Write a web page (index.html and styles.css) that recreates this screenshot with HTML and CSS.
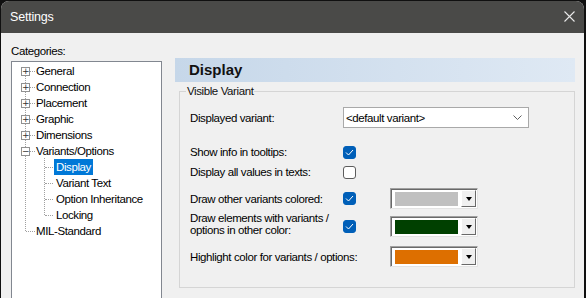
FILE: index.html
```html
<!DOCTYPE html>
<html lang="en">
<head>
    <meta charset="UTF-8">
    <title>Settings</title>
    <link rel="stylesheet" href="styles.css">
</head>
<body>
    <div class="window">
        <div class="titlebar">
            <span class="title">Settings</span>
            <svg class="close" width="11" height="11" viewBox="0 0 11 11">
                <path d="M0.5 0.5 L10.5 10.5 M10.5 0.5 L0.5 10.5" stroke="#e8e8e8" stroke-width="1.1" fill="none"/>
            </svg>
        </div>

        <div class="content">
            <div class="left-col">
                <div class="cat-label">Categories:</div>
                <div class="tree">
                    <div class="vline top-line"></div>
                    <div class="vline child-line"></div>

                    <div class="node">
                        <span class="exp">+</span><span class="tick"></span><span class="label">General</span>
                    </div>
                    <div class="node">
                        <span class="exp">+</span><span class="tick"></span><span class="label">Connection</span>
                    </div>
                    <div class="node">
                        <span class="exp">+</span><span class="tick"></span><span class="label">Placement</span>
                    </div>
                    <div class="node">
                        <span class="exp">+</span><span class="tick"></span><span class="label">Graphic</span>
                    </div>
                    <div class="node">
                        <span class="exp">+</span><span class="tick"></span><span class="label">Dimensions</span>
                    </div>
                    <div class="node">
                        <span class="exp minus">&minus;</span><span class="tick"></span><span class="label">Variants/Options</span>
                    </div>
                    <div class="node child">
                        <span class="tick"></span><span class="label selected">Display</span>
                    </div>
                    <div class="node child">
                        <span class="tick"></span><span class="label">Variant Text</span>
                    </div>
                    <div class="node child">
                        <span class="tick"></span><span class="label">Option Inheritance</span>
                    </div>
                    <div class="node child">
                        <span class="tick"></span><span class="label">Locking</span>
                    </div>
                    <div class="node leaf">
                        <span class="tick"></span><span class="label">MIL-Standard</span>
                    </div>
                </div>
            </div>

            <div class="right-col">
                <div class="page-head">Display</div>

                <fieldset class="group">
                    <legend>Visible Variant</legend>

                    <div class="row first">
                        <span class="row-label">Displayed variant:</span>
                        <div class="combo">
                            <span>&lt;default variant&gt;</span>
                            <svg width="9" height="5" viewBox="0 0 9 5">
                                <path d="M0.5 0.5 L4.5 4.5 L8.5 0.5" stroke="#606060" stroke-width="1" fill="none"/>
                            </svg>
                        </div>
                    </div>

                    <div class="row check-row tooltips">
                        <span class="row-label">Show info in tooltips:</span>
                        <span class="check on"><svg width="9" height="7" viewBox="0 0 9 7"><path d="M1 3.5 L3.5 6 L8 1" stroke="#fff" stroke-width="1" fill="none"/></svg></span>
                    </div>

                    <div class="row check-row">
                        <span class="row-label">Display all values in texts:</span>
                        <span class="check"></span>
                    </div>

                    <div class="row color-row other">
                        <span class="row-label">Draw other variants colored:</span>
                        <span class="check on"><svg width="9" height="7" viewBox="0 0 9 7"><path d="M1 3.5 L3.5 6 L8 1" stroke="#fff" stroke-width="1" fill="none"/></svg></span>
                        <div class="color-combo">
                            <span class="swatch gray"></span>
                            <span class="drop"><span class="tri"></span></span>
                        </div>
                    </div>

                    <div class="row color-row elements">
                        <span class="row-label two-line">Draw elements with variants /<br>options in other color:</span>
                        <span class="check on"><svg width="9" height="7" viewBox="0 0 9 7"><path d="M1 3.5 L3.5 6 L8 1" stroke="#fff" stroke-width="1" fill="none"/></svg></span>
                        <div class="color-combo">
                            <span class="swatch green"></span>
                            <span class="drop"><span class="tri"></span></span>
                        </div>
                    </div>

                    <div class="row color-row highlight">
                        <span class="row-label wide">Highlight color for variants / options:</span>
                        <div class="color-combo">
                            <span class="swatch orange"></span>
                            <span class="drop"><span class="tri"></span></span>
                        </div>
                    </div>
                </fieldset>
            </div>
        </div>
    </div>
</body>
</html>
```

FILE: styles.css
```css
* {
    margin: 0;
    padding: 0;
    box-sizing: border-box;
}

html, body {
    height: 298px;
    overflow: hidden;
}

body {
    background: #101010;
    font-family: 'Liberation Sans', Arial, sans-serif;
    font-size: 11.5px;
    letter-spacing: -0.4px;
    color: #000;
}

.window {
    margin: 1px 0 0 1px;
    width: 583px;
    height: 297px;
    background: #f0f0f0;
    border-radius: 8px 8px 0 0;
    overflow: hidden;
}

/* title bar */
.titlebar {
    height: 32px;
    background: #4a4a48;
    display: flex;
    align-items: center;
    justify-content: space-between;
    padding: 0 9px 0 9px;
}

.title {
    color: #fff;
    font-size: 12.5px;
    letter-spacing: -0.2px;
    margin-top: -1px;
}

.close {
    margin-top: -1px;
}

.content {
    display: flex;
    align-items: flex-start;
}

/* left: categories tree */
.left-col {
    width: 174px;
    padding-left: 10px;
}

.cat-label {
    padding-top: 11px;
    height: 28px;
    line-height: 14px;
}

.tree {
    position: relative;
    width: 151px;
    height: 237px;
    background: #fff;
    border: 1px solid #828790;
    border-bottom: none;
    padding-top: 1px;
}

.vline {
    position: absolute;
    border-left: 1px dotted #a0a0a0;
}

.top-line {
    left: 13px;
    top: 9px;
    height: 160px;
}

.child-line {
    left: 32px;
    top: 96px;
    height: 57px;
}

.node {
    position: relative;
    height: 16px;
    display: flex;
    align-items: center;
    padding-left: 9px;
    white-space: nowrap;
}

.exp {
    width: 9px;
    height: 9px;
    border: 1px solid #919191;
    background: #fff;
    font-size: 9px;
    line-height: 7px;
    text-align: center;
    color: #333;
    letter-spacing: 0;
    font-family: 'DejaVu Sans', sans-serif;
}

.tick {
    width: 5px;
    border-bottom: 1px dotted #a0a0a0;
    margin-right: 1px;
}

.label {
    line-height: 16px;
}

.node.leaf {
    padding-left: 14px;
}

.node.leaf .tick {
    width: 9px;
}

.node.child {
    padding-left: 33px;
}

.node.child .tick {
    width: 8px;
    margin-right: 1px;
}

.node.child .label {
    padding: 0 2px;
}

.label.selected {
    background: #0078d7;
    color: #fff;
}

/* right: page */
.right-col {
    width: 400px;
    padding-top: 25px;
}

.page-head {
    height: 24px;
    background: linear-gradient(to right, #c6d7e9, #dfe9f4);
    font-size: 15px;
    font-weight: bold;
    letter-spacing: 0;
    padding-left: 14px;
    line-height: 24px;
    color: #111;
}

.group {
    margin: 2px 0 0 4px;
    width: 396px;
    height: 204px;
    border: 1px solid #d5d5d5;
    padding: 0 10px;
    min-width: 0;
}

.group legend {
    margin-left: -4px;
    padding: 0 1px;
    line-height: 14px;
    color: #111;
}

.row {
    display: flex;
    align-items: center;
}

.row-label {
    width: 153px;
    flex-shrink: 0;
    white-space: nowrap;
}

.row.first {
    height: 21px;
    margin-top: 9px;
}

.combo {
    width: 186px;
    height: 21px;
    background: #fff;
    border: 1px solid #a9a9a9;
    display: flex;
    align-items: center;
    justify-content: space-between;
    padding: 0 6px 0 2px;
}

.check-row {
    height: 20px;
}

.row.tooltips {
    margin-top: 14px;
}

.check {
    width: 13px;
    height: 13px;
    border: 1px solid #5c5c5c;
    border-radius: 3px;
    background: #fff;
    display: flex;
    align-items: center;
    justify-content: center;
}

.check.on {
    background: #005fb8;
    border-color: #005fb8;
}

.color-row {
    height: 21px;
}

.row.other {
    margin-top: 6px;
}

.row.elements {
    margin-top: 7px;
}

.row.highlight {
    margin-top: 9px;
}

.two-line {
    line-height: 12px;
    margin-top: -5px;
}

.row-label.wide {
    width: 200px;
}

.color-row .check {
    margin-right: 34px;
}

.color-combo {
    width: 88px;
    height: 21px;
    background: #fff;
    border: 1px solid;
    border-color: #a0a0a0 #e3e3e3 #e3e3e3 #a0a0a0;
    box-shadow: inset 1px 1px 0 #696969;
    display: flex;
    align-items: stretch;
    padding: 3px 1px 2px 4px;
}

.swatch {
    width: 63px;
    margin-right: 3px;
}

.swatch.gray {
    background: #c0c0c0;
}

.swatch.green {
    background: #004000;
}

.swatch.orange {
    background: #dd6f00;
}

.drop {
    flex: 1;
    margin: -2px 0 -1px 0;
    background: #f0f0f0;
    border: 1px solid;
    border-color: #fff #696969 #696969 #fff;
    display: flex;
    align-items: center;
    justify-content: center;
}

.tri {
    width: 0;
    height: 0;
    border-left: 3.5px solid transparent;
    border-right: 3.5px solid transparent;
    border-top: 4px solid #000;
}
```
